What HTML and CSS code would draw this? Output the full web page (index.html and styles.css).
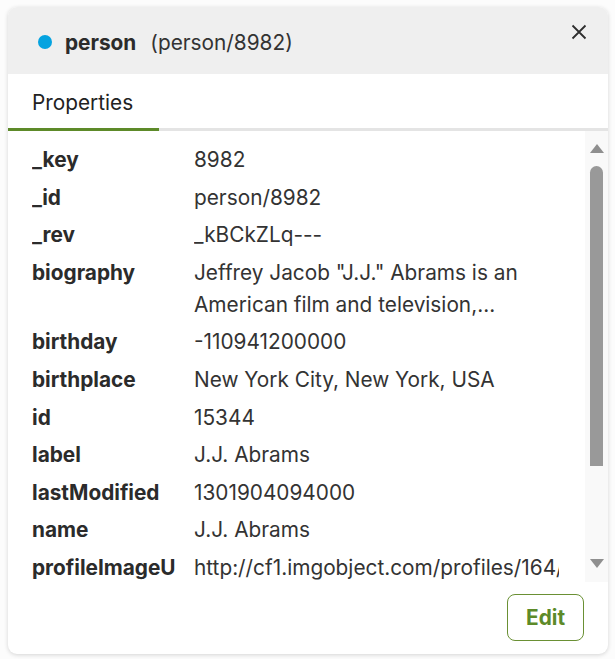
FILE: index.html
```html
<!DOCTYPE html>
<html>
<head>
<meta charset="utf-8">
<link rel="stylesheet" href="styles.css">
</head>
<body>
<div class="card">
  <div class="header">
    <span class="dot"></span>
    <span class="title">person</span>
    <span class="subtitle">(person/8982)</span>
    <span class="close">
      <svg width="16" height="16" viewBox="0 0 16 16"><path d="M1.5 1.5 L14.5 14.5 M14.5 1.5 L1.5 14.5" stroke="#2e2e2e" stroke-width="1.8" fill="none"/></svg>
    </span>
  </div>
  <div class="tabs">
    <div class="tab active">Properties</div>
  </div>
  <div class="body">
    <div class="rows">
      <div class="row"><div class="k">_key</div><div class="v">8982</div></div>
      <div class="row"><div class="k">_id</div><div class="v">person/8982</div></div>
      <div class="row"><div class="k">_rev</div><div class="v">_kBCkZLq---</div></div>
      <div class="row"><div class="k">biography</div><div class="v clamp">Jeffrey Jacob "J.J." Abrams is an American film and television, producer, screenwriter, director, actor, and composer.</div></div>
      <div class="row"><div class="k">birthday</div><div class="v">-110941200000</div></div>
      <div class="row"><div class="k">birthplace</div><div class="v">New York City, New York, USA</div></div>
      <div class="row"><div class="k">id</div><div class="v">15344</div></div>
      <div class="row"><div class="k">label</div><div class="v">J.J. Abrams</div></div>
      <div class="row"><div class="k">lastModified</div><div class="v">1301904094000</div></div>
      <div class="row"><div class="k">name</div><div class="v">J.J. Abrams</div></div>
      <div class="row"><div class="k">profileImageUrl</div><div class="v">http://cf1.imgobject.com/profiles/164/4c1b9f267b9aa1659a000164/j-j-abrams-profile.jpg</div></div>
    </div>
    <div class="scrollbar">
      <span class="arrow up"></span>
      <span class="thumb"></span>
      <span class="arrow down"></span>
    </div>
  </div>
  <div class="footer">
    <button class="edit">Edit</button>
  </div>
</div>
</body>
</html>
```

FILE: styles.css
```css
* { box-sizing: border-box; }
html, body { margin: 0; padding: 0; background: #fcfcfc; }
body {
  font-family: Inter, "Noto Sans", sans-serif;
  color: #2b2b2b;
  padding: 7px 7px 5px 8px;
}
.card {
  width: 600px;
  height: 647px;
  background: #ffffff;
  border-radius: 9px;
  box-shadow: 0 1px 4px rgba(0,0,0,0.16);
  overflow: hidden;
  display: flex;
  flex-direction: column;
}
.header {
  height: 67px;
  background: #efefef;
  display: flex;
  align-items: center;
  padding: 3px 0 0 30px;
  flex-shrink: 0;
}
.dot {
  width: 14px;
  height: 14px;
  border-radius: 50%;
  background: #05a3e0;
  margin-right: 13px;
}
.title {
  font-weight: 700;
  font-size: 20.8px;
  margin-right: 14px;
}
.subtitle {
  font-size: 20.8px;
  color: #333;
}
.close {
  margin-left: auto;
  margin-right: 21px;
  margin-top: -21px;
  display: flex;
}
.tabs {
  height: 57px;
  border-bottom: 3px solid #e4e4e4;
  display: flex;
  flex-shrink: 0;
}
.tab {
  width: 151px;
  padding-left: 24px;
  padding-top: 2px;
  font-size: 20.8px;
  display: flex;
  align-items: center;
  margin-bottom: -3px;
  color: #222;
}
.tab.active { border-bottom: 3px solid #5d8a29; }
.body {
  height: 451px;
  display: flex;
  flex-shrink: 0;
}
.rows {
  flex: 1;
  padding: 13px 0 0 24px;
  overflow: hidden;
}
.row {
  display: flex;
  font-size: 20.8px;
  line-height: 32px;
  margin-bottom: 5.6px;
}
.k {
  width: 144px;
  flex-shrink: 0;
  font-weight: 700;
  white-space: nowrap;
  overflow: hidden;
  margin-right: 18px;
}
.v {
  width: 365px;
  flex-shrink: 0;
  white-space: nowrap;
  overflow: hidden;
  color: #333;
}
.v.clamp {
  white-space: normal;
  display: -webkit-box;
  -webkit-line-clamp: 2;
  -webkit-box-orient: vertical;
}
.scrollbar {
  width: 23px;
  background: #f9f9f9;
  display: flex;
  flex-direction: column;
  align-items: center;
  padding: 13px 0 0 0;
}
.arrow {
  width: 0; height: 0;
  border-left: 7px solid transparent;
  border-right: 7px solid transparent;
}
.arrow.up { border-bottom: 9px solid #8f8f8f; }
.arrow.down { border-top: 9px solid #8f8f8f; }
.thumb {
  width: 13px;
  height: 300px;
  margin-top: 13px;
  background: #999;
  border-radius: 7px 7px 0 0;
  flex-shrink: 0;
}
.thumb + .arrow.down { margin-top: auto; margin-bottom: 14px; }
.footer {
  flex: 1;
  display: flex;
  justify-content: flex-end;
  align-items: flex-start;
  padding: 12px 24px 0 0;
}
.edit {
  width: 77px;
  height: 47px;
  border: 1px solid #6a9034;
  border-radius: 8px;
  background: #fff;
  color: #5d8a29;
  font-family: Inter, "Noto Sans", sans-serif;
  font-weight: 700;
  font-size: 20.8px;
  cursor: pointer;
}
```
